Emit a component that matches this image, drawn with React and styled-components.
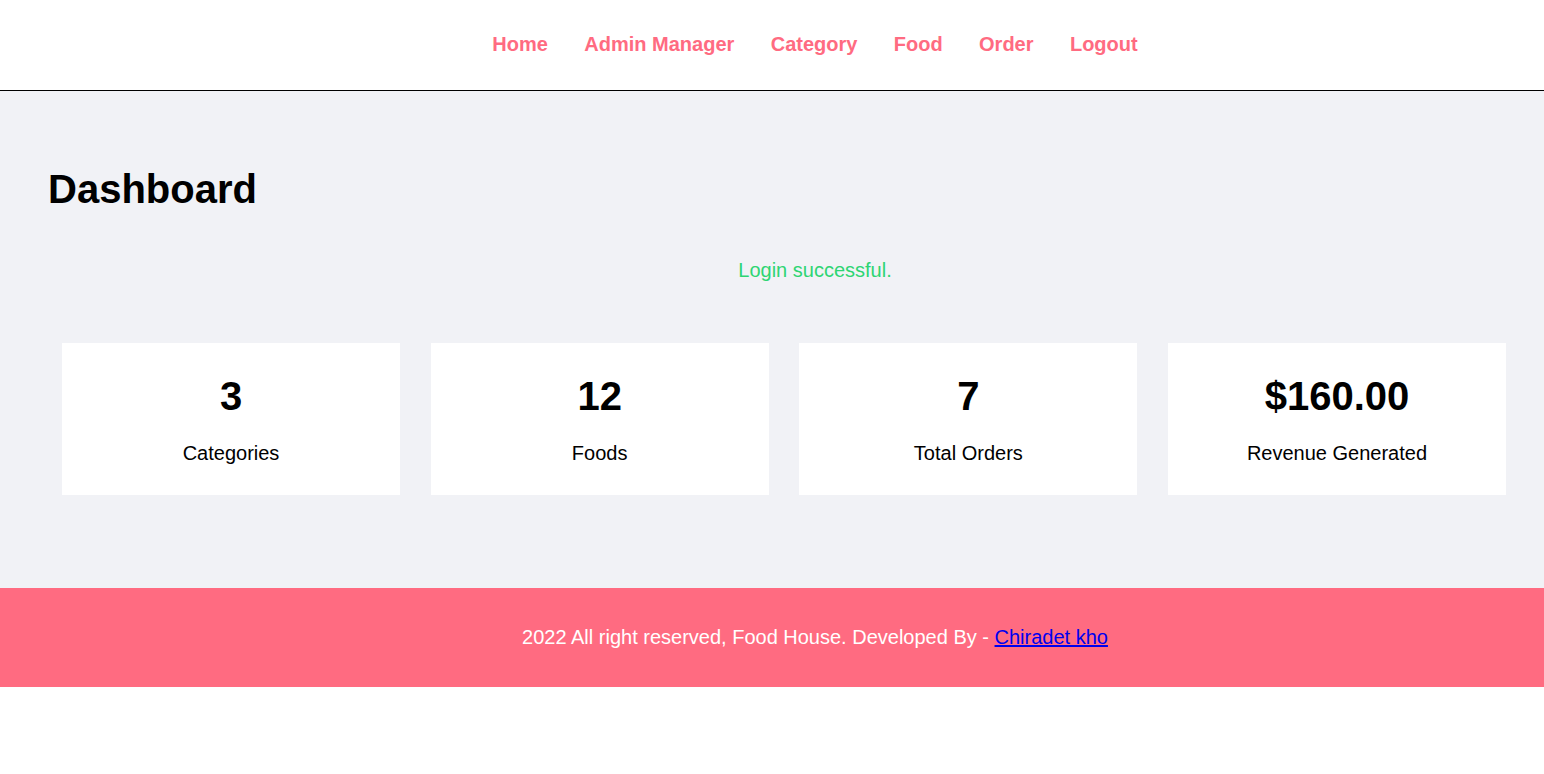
import React from "react";
import styled, { createGlobalStyle } from "styled-components";

const Global = createGlobalStyle`
  html, body { margin: 0; padding: 0; background: #ffffff; }
  body { font-family: "Liberation Sans", Arial, sans-serif; color: #000; }
`;

const Header = styled.header`
  box-sizing: border-box;
  height: 91px;
  border-bottom: 1px solid #000;
  display: flex;
  align-items: center;
  justify-content: center;
  padding-left: 86px;
  padding-bottom: 2px;
`;

const Nav = styled.nav`
  display: flex;
  gap: 36.4px;
`;

const NavLink = styled.a`
  font-size: 20px;
  line-height: 23px;
  font-weight: bold;
  color: #ff6b81;
  text-decoration: none;
`;

const Main = styled.main`
  background: #f1f2f6;
  padding: 74.5px 0 93px;
`;

const Title = styled.h1`
  margin: 0 0 0 48px;
  font-size: 40px;
  line-height: 46px;
  font-weight: bold;
`;

const Message = styled.p`
  margin: 46.5px 0 0;
  padding-left: 86px;
  text-align: center;
  color: #2ed573;
  font-size: 20px;
  line-height: 24px;
`;

const Cards = styled.div`
  display: grid;
  grid-template-columns: repeat(4, 1fr);
  column-gap: 30.67px;
  margin: 61px 38px 0 62px;
`;

const Card = styled.div`
  background: #fff;
  text-align: center;
  padding: 29.5px 0 30.4px;
`;

const Value = styled.div`
  font-size: 40px;
  line-height: 46px;
  font-weight: bold;
`;

const Label = styled.div`
  margin-top: 23px;
  font-size: 20px;
  line-height: 23px;
`;

const Footer = styled.footer`
  background: #ff6b81;
  height: 99px;
  display: flex;
  align-items: center;
  justify-content: center;
  padding-left: 86px;
  color: #fff;
  font-size: 20px;
  line-height: 23px;
`;

const FooterLink = styled.a`
  color: #0000ee;
  text-decoration: underline;
`;

const stats = [
  { value: "3", label: "Categories" },
  { value: "12", label: "Foods" },
  { value: "7", label: "Total Orders" },
  { value: "$160.00", label: "Revenue Generated" },
];

const links = ["Home", "Admin Manager", "Category", "Food", "Order", "Logout"];

export default function App() {
  return (
    <>
      <Global />
      <Header>
        <Nav>
          {links.map((l) => (
            <NavLink key={l} href="#">{l}</NavLink>
          ))}
        </Nav>
      </Header>
      <Main>
        <Title>Dashboard</Title>
        <Message>Login successful.</Message>
        <Cards>
          {stats.map((s) => (
            <Card key={s.label}>
              <Value>{s.value}</Value>
              <Label>{s.label}</Label>
            </Card>
          ))}
        </Cards>
      </Main>
      <Footer>
        <span>
          2022 All right reserved, Food House. Developed By -{" "}
          <FooterLink href="#">Chiradet kho</FooterLink>
        </span>
      </Footer>
    </>
  );
}
